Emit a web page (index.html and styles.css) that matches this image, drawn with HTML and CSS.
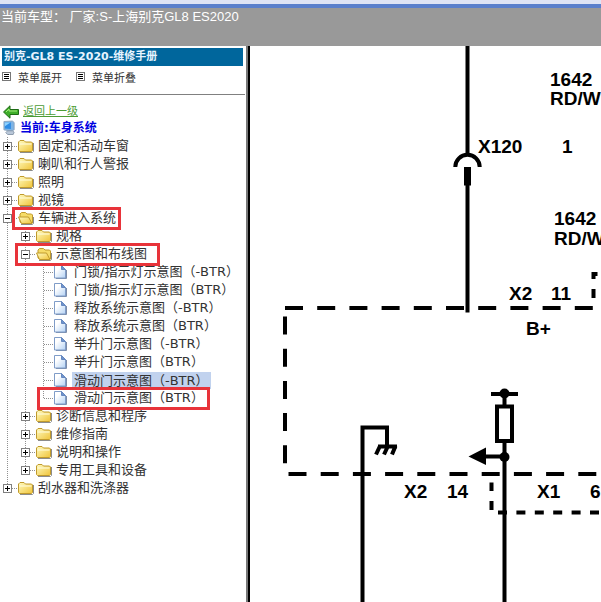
FILE: index.html
```html
<!DOCTYPE html>
<html lang="zh-CN">
<head>
    <meta charset="UTF-8">
    <meta name="viewport" content="width=device-width, initial-scale=1.0">
    <title>别克-GL8 ES-2020-维修手册</title>
    <link rel="stylesheet" href="styles.css">
</head>
<body>

<!-- Icônes partagées -->
<svg class="sprite" aria-hidden="true">
    <defs>
        <linearGradient id="gold" x1="0" y1="0" x2="1" y2="1">
            <stop offset="0" stop-color="#fffbc0"/>
            <stop offset="1" stop-color="#f0c43a"/>
        </linearGradient>
        <linearGradient id="sheet" x1="0" y1="0" x2="1" y2="1">
            <stop offset="0.3" stop-color="#ffffff"/>
            <stop offset="1" stop-color="#b4d2f4"/>
        </linearGradient>
    </defs>
    <symbol id="plus" viewBox="0 0 9 9">
        <rect x="0.5" y="0.5" width="8" height="8" fill="#fff" stroke="#808080"/>
        <path d="M2 4.5h5M4.5 2v5" stroke="#000"/>
    </symbol>
    <symbol id="minus" viewBox="0 0 9 9">
        <rect x="0.5" y="0.5" width="8" height="8" fill="#fff" stroke="#808080"/>
        <path d="M2 4.5h5" stroke="#000"/>
    </symbol>
    <symbol id="folder" viewBox="0 0 16 14">
        <path d="M2 13.5h12.5l1-1V4" fill="none" stroke="#8c8c8c"/>
        <path d="M0.5 11.5V3L2 1.5h4L7.5 3h6l1 1v7.5l-1 1h-12z" fill="url(#gold)" stroke="#c09a2c"/>
        <path d="M1.5 5h12" stroke="#fffde0"/>
    </symbol>
    <symbol id="folder-open" viewBox="0 0 16 14">
        <path d="M3 13.5h11.5l1-1V6" fill="none" stroke="#8c8c8c"/>
        <path d="M2 11V3l1.5-1.5h4L9 3h4.5l1 1v8h-11z" fill="#f6dc68" stroke="#c09a2c"/>
        <path d="M0.5 6h10l3.5 6.5H3.5z" fill="url(#gold)" stroke="#c09a2c"/>
    </symbol>
    <symbol id="page" viewBox="0 0 13 14">
        <path d="M2 13.5h10.5V5" fill="none" stroke="#7c8ca8"/>
        <path d="M0.5 0.5h7l4 4v8.5h-11z" fill="url(#sheet)" stroke="#7f9cc8"/>
        <path d="M7.5 0.5v4h4z" fill="#6d93cc" stroke="#6688c0"/>
    </symbol>
    <symbol id="list" viewBox="0 0 9 9">
        <rect x="0.5" y="0.5" width="8" height="8" fill="#fff" stroke="#777"/>
        <path d="M2 2.5h5M2 4.5h5M2 6.5h5" stroke="#000"/>
    </symbol>
</svg>

<header class="top">
    <p class="vehicle">当前车型： 厂家:S-上海别克GL8 ES2020</p>
</header>

<div class="panes">
    <nav class="sidebar">
        <h1 class="manual">别克-GL8 ES-2020-维修手册</h1>

        <div class="toolbar">
            <button class="tool" type="button"><svg class="box"><use href="#list"/></svg>菜单展开</button>
            <button class="tool" type="button"><svg class="box"><use href="#list"/></svg>菜单折叠</button>
        </div>

        <div class="crumbs">
            <a class="back" href="#">
                <svg class="crumb-icon" viewBox="0 0 16 14">
                    <path d="M0.5 7L7 0.8V4.5h8.5v5H7v3.7z" fill="#3fae2a" stroke="#1d6b14"/>
                    <path d="M3 7l3-3v2h8" fill="none" stroke="#a4ec7c"/>
                </svg>
                <span>返回上一级</span>
            </a>
            <p class="current">
                <svg class="crumb-icon pc" viewBox="0 0 14 16">
                    <path d="M1 1l9-0.5 2 1.5v8l-3 1.5-8-1.5z" fill="#7db4e6" stroke="#8fa5bd"/>
                    <path d="M2 2h6.5v7L2 8.5z" fill="#2d8ce4"/>
                    <path d="M2 2h6L2 6z" fill="#8ed2ff"/>
                    <path d="M5 11h5l2 1.5-1 2.5H5l-2-2z" fill="#b9c7d8" stroke="#8797aa"/>
                </svg>
                当前:车身系统
            </p>
        </div>

        <!-- Arborescence du manuel -->
        <ul class="tree">
            <li><div class="row"><button class="toggle" type="button" aria-label="展开"><svg class="box"><use href="#plus"/></svg></button><svg class="folder"><use href="#folder"/></svg><a href="#">固定和活动车窗</a></div></li>
            <li><div class="row"><button class="toggle" type="button" aria-label="展开"><svg class="box"><use href="#plus"/></svg></button><svg class="folder"><use href="#folder"/></svg><a href="#">喇叭和行人警报</a></div></li>
            <li><div class="row"><button class="toggle" type="button" aria-label="展开"><svg class="box"><use href="#plus"/></svg></button><svg class="folder"><use href="#folder"/></svg><a href="#">照明</a></div></li>
            <li><div class="row"><button class="toggle" type="button" aria-label="展开"><svg class="box"><use href="#plus"/></svg></button><svg class="folder"><use href="#folder"/></svg><a href="#">视镜</a></div></li>
            <li>
                <div class="row marked marked-system"><button class="toggle" type="button" aria-label="折叠"><svg class="box"><use href="#minus"/></svg></button><svg class="folder"><use href="#folder-open"/></svg><a href="#">车辆进入系统</a></div>
                <ul>
                    <li><div class="row"><button class="toggle" type="button" aria-label="展开"><svg class="box"><use href="#plus"/></svg></button><svg class="folder"><use href="#folder"/></svg><a href="#">规格</a></div></li>
                    <li>
                        <div class="row marked marked-section"><button class="toggle" type="button" aria-label="折叠"><svg class="box"><use href="#minus"/></svg></button><svg class="folder"><use href="#folder-open"/></svg><a href="#">示意图和布线图</a></div>
                        <ul>
                            <li><div class="row leaf"><svg class="page"><use href="#page"/></svg><a href="#">门锁/指示灯示意图（-BTR）</a></div></li>
                            <li><div class="row leaf"><svg class="page"><use href="#page"/></svg><a href="#">门锁/指示灯示意图（BTR）</a></div></li>
                            <li><div class="row leaf"><svg class="page"><use href="#page"/></svg><a href="#">释放系统示意图（-BTR）</a></div></li>
                            <li><div class="row leaf"><svg class="page"><use href="#page"/></svg><a href="#">释放系统示意图（BTR）</a></div></li>
                            <li><div class="row leaf"><svg class="page"><use href="#page"/></svg><a href="#">举升门示意图（-BTR）</a></div></li>
                            <li><div class="row leaf"><svg class="page"><use href="#page"/></svg><a href="#">举升门示意图（BTR）</a></div></li>
                            <li><div class="row leaf"><svg class="page"><use href="#page"/></svg><a class="selected" href="#">滑动门示意图（-BTR）</a></div></li>
                            <li><div class="row leaf marked marked-page"><svg class="page"><use href="#page"/></svg><a href="#">滑动门示意图（BTR）</a></div></li>
                        </ul>
                    </li>
                    <li><div class="row"><button class="toggle" type="button" aria-label="展开"><svg class="box"><use href="#plus"/></svg></button><svg class="folder"><use href="#folder"/></svg><a href="#">诊断信息和程序</a></div></li>
                    <li><div class="row"><button class="toggle" type="button" aria-label="展开"><svg class="box"><use href="#plus"/></svg></button><svg class="folder"><use href="#folder"/></svg><a href="#">维修指南</a></div></li>
                    <li><div class="row"><button class="toggle" type="button" aria-label="展开"><svg class="box"><use href="#plus"/></svg></button><svg class="folder"><use href="#folder"/></svg><a href="#">说明和操作</a></div></li>
                    <li><div class="row"><button class="toggle" type="button" aria-label="展开"><svg class="box"><use href="#plus"/></svg></button><svg class="folder"><use href="#folder"/></svg><a href="#">专用工具和设备</a></div></li>
                </ul>
            </li>
            <li><div class="row"><button class="toggle" type="button" aria-label="展开"><svg class="box"><use href="#plus"/></svg></button><svg class="folder"><use href="#folder"/></svg><a href="#">刮水器和洗涤器</a></div></li>
        </ul>
    </nav>

    <!-- Schéma électrique -->
    <main class="diagram">
        <svg class="schematic">
            <g transform="translate(-250 -46)">
                <g class="wire">
                    <path d="M467.5 46V154M467.5 184V312.5"/>
                    <path d="M455.3 167A12.2 12.2 0 0 1 479.7 167"/>
                    <path d="M362.5 2000V427.5H387V446"/>
                    <path d="M378 446.5H397M380 446L376 454.5M388 446L384 454.5M395.5 446L392 454.5"/>
                    <path d="M491 394H518M504.5 394V406M504.5 441V2000M504.5 456.5H484"/>
                    <rect x="497" y="406.5" width="15" height="34.5"/>
                    <path d="M597.5 274H593.5V279M593.5 289V298"/>
                    <path d="M491.5 482.5V491M491.5 501V510"/>
                </g>
                <g class="wire">
                    <path class="dash" d="M285 308H594"/>
                    <path class="dash" d="M285 316.5V464"/>
                    <path class="dash" d="M288.5 474H2000"/>
                    <path class="dash-short" d="M498 512.5H2000"/>
                </g>
                <rect x="464" y="167" width="7" height="18.5"/>
                <circle cx="504.5" cy="393.5" r="5"/>
                <circle cx="504.5" cy="457" r="5"/>
                <path d="M468.5 456.5L486 447.5V465z"/>
                <g class="label">
                    <text x="550" y="86">1642</text>
                    <text x="550" y="105">RD/W</text>
                    <text x="478" y="153">X120</text>
                    <text x="562" y="153">1</text>
                    <text x="554" y="225">1642</text>
                    <text x="554" y="245">RD/W</text>
                    <text x="509" y="300">X2</text>
                    <text x="551" y="300">11</text>
                    <text x="526" y="335">B+</text>
                    <text x="404" y="498">X2</text>
                    <text x="447" y="498">14</text>
                    <text x="537" y="498">X1</text>
                    <text x="590" y="498">6</text>
                </g>
            </g>
        </svg>
    </main>
</div>

</body>
</html>
```
FILE: styles.css
```css
* {
    margin: 0;
    padding: 0;
    box-sizing: border-box;
}
body {
    display: flex;
    flex-direction: column;
    height: 100vh;
    font-family: "DejaVu Sans", "Noto Sans CJK SC", sans-serif;
    font-size: 13px;
    background: #fff;
    color: #333;
    overflow: hidden;
}
svg {
    display: block;
    flex-shrink: 0;
}
.sprite {
    position: absolute;
    width: 0;
    height: 0;
}
button {
    border: none;
    background: none;
    font: inherit;
    color: inherit;
    cursor: pointer;
}
a {
    color: inherit;
    text-decoration: none;
}

/* Bandeau du haut */
.top {
    height: 46px;
    flex-shrink: 0;
    background: #999;
    border-top: 4px solid #dfe4f5;
}
.vehicle {
    padding-left: 1px;
    border-top: 4px solid #5b80cc;
    font-family: "Liberation Sans", "Noto Sans CJK SC", sans-serif;
    line-height: 18px;
    color: #fff;
    white-space: pre;
}
.panes {
    display: flex;
    flex: 1;
    min-height: 0;
}

/* Menu de gauche */
.sidebar {
    width: 250px;
    flex-shrink: 0;
    padding-top: 2px;
    border-right: 2px solid #000;
    box-shadow: inset -2px 0 #777;
    overflow: hidden;
}
.manual {
    height: 18px;
    margin: 0 5px 0 2px;
    padding-left: 2px;
    background: #00669c;
    color: #e6f4ff;
    font-size: 11px;
    line-height: 18px;
}
.toolbar {
    display: flex;
    gap: 14px;
    height: 29px;
    margin-right: 3px;
    padding: 0 0 7px 2px;
    border-bottom: 1px solid #808080;
    font-size: 11px;
}
.tool {
    display: flex;
    align-items: center;
    gap: 7px;
}
.box {
    width: 9px;
    height: 9px;
}
.crumbs {
    padding: 9px 0 0 3px;
    font-size: 11px;
    line-height: 16px;
}
.back, .current {
    display: flex;
    align-items: center;
    gap: 4px;
    height: 16px;
}
.back {
    color: #4c9c34;
}
.back span {
    text-decoration: underline;
}
.current {
    color: #0000e0;
    font-size: 12px;
    font-weight: bold;
}
.crumb-icon {
    width: 16px;
    height: 14px;
}
.pc {
    width: 13px;
    height: 16px;
}

/* Arbre */
.tree, .tree ul {
    list-style: none;
}
.tree {
    padding-top: 1px;
}
.tree ul {
    padding-left: 18px;
}
.tree li {
    background: repeating-linear-gradient(#909090 0 1px, transparent 1px 2px) 7px 0 / 1px 100% no-repeat;
}
.tree li:last-child {
    background-size: 1px 9px;
}
.row {
    display: flex;
    align-items: center;
    width: max-content;
    height: 18px;
    line-height: 18px;
    white-space: nowrap;
}
.toggle {
    width: 18px;
    padding-left: 3px;
    background: repeating-linear-gradient(90deg, #909090 0 1px, transparent 1px 2px) 12px 4px / 6px 1px no-repeat;
}
.folder {
    width: 16px;
    height: 14px;
    margin-right: 4px;
}
.leaf {
    padding-left: 18px;
    background: repeating-linear-gradient(90deg, #909090 0 1px, transparent 1px 2px) 8px 9px / 10px 1px no-repeat;
}
.page {
    width: 13px;
    height: 14px;
    margin-right: 5px;
}
.leaf a {
    padding: 0 2px;
}
.selected {
    height: 17px;
    background: #c1d2ee;
}

/* Cadres rouges */
.marked {
    position: relative;
}
.marked::after {
    content: "";
    position: absolute;
    top: -2px;
    bottom: -3px;
    left: 12px;
    right: -5px;
    border: 3px solid #e8333a;
    pointer-events: none;
}
.marked-section::after {
    left: -3px;
    right: -13px;
}
.marked-page::after {
    left: 1px;
    right: -4px;
}

/* Schéma */
.diagram {
    flex: 1;
    min-width: 0;
}
.schematic {
    width: 100%;
    height: 100%;
}
.wire {
    fill: none;
    stroke: #000;
    stroke-width: 4px;
}
.dash {
    stroke-dasharray: 18 14.2;
}
.dash-short {
    stroke-dasharray: 9 9.4;
}
.label {
    font-family: "Liberation Sans", sans-serif;
    font-size: 19px;
    font-weight: bold;
}
```
